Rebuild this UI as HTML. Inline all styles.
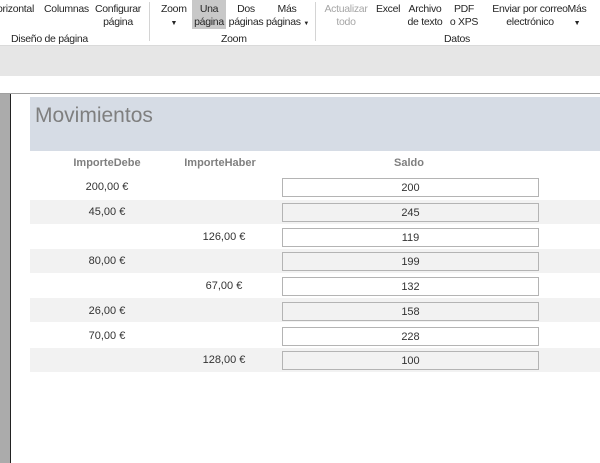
<!DOCTYPE html><html><head><style>
body{margin:0;width:600px;height:463px;overflow:hidden;background:#fff;font-family:"Liberation Sans",sans-serif;position:relative}
.a{position:absolute;white-space:nowrap}
.r{font-size:10.5px;letter-spacing:-0.3px;color:#262626;text-align:center;line-height:13px}
.c{font-size:11px;color:#444;text-align:center;width:120px}
.bx{position:absolute;left:282px;width:255px;height:17px;border:1px solid #b4b4b4;font-size:11px;color:#333;text-align:center;line-height:18px}
.g{position:absolute;left:30px;width:570px;height:24px;background:#f2f2f2}
</style></head><body>
<div class="a r" style="left:-3px;top:3px">orizontal</div>
<div class="a r" style="left:44px;top:3px">Columnas</div>
<div class="a r" style="left:93px;top:3px;width:50px">Configurar<br>página</div>
<div class="a r" style="left:11px;top:33px">Diseño de página</div>
<div class="a" style="left:149px;top:2px;width:1px;height:39px;background:#d4d4d4"></div>
<div class="a r" style="left:161px;top:3px">Zoom<br><span style="font-size:7px">▼</span></div>
<div class="a" style="left:192px;top:0;width:34px;height:29px;background:#c8c8c8"></div>
<div class="a r" style="left:193px;top:3px;width:32px">Una<br>página</div>
<div class="a r" style="left:227px;top:3px;width:38px">Dos<br>páginas</div>
<div class="a r" style="left:266px;top:3px;width:42px">Más<br>páginas <span style="font-size:6px">▼</span></div>
<div class="a r" style="left:221px;top:33px">Zoom</div>
<div class="a" style="left:315px;top:2px;width:1px;height:39px;background:#d4d4d4"></div>
<div class="a r" style="left:323px;top:3px;color:#a6a6a6;width:46px">Actualizar<br>todo</div>
<div class="a r" style="left:376px;top:3px">Excel</div>
<div class="a r" style="left:405px;top:3px;width:40px">Archivo<br>de texto</div>
<div class="a r" style="left:449px;top:3px;width:30px">PDF<br>o XPS</div>
<div class="a r" style="left:482px;top:3px;width:96px">Enviar por correo<br>electrónico</div>
<div class="a r" style="left:567px;top:3px;width:20px">Más<br><span style="font-size:7px">▼</span></div>
<div class="a r" style="left:444px;top:33px">Datos</div>
<div class="a" style="left:0;top:45px;width:600px;height:30px;background:#e6e6e6;border-top:1px solid #dadada"></div>
<div class="a" style="left:0;top:93px;width:600px;height:1px;background:#a0a0a0"></div>
<div class="a" style="left:0;top:94px;width:10px;height:369px;background:#ababab"></div>
<div class="a" style="left:10px;top:94px;width:1px;height:369px;background:#222"></div>
<div class="a" style="left:30px;top:97px;width:570px;height:54px;background:#d6dce5"></div>
<div class="a" style="left:35px;top:104px;font-size:21px;color:#7f7f7f">Movimientos</div>
<div class="a c" style="left:47px;top:157px;font-weight:bold;color:#7f7f7f">ImporteDebe</div>
<div class="a c" style="left:160px;top:157px;font-weight:bold;color:#7f7f7f">ImporteHaber</div>
<div class="a c" style="left:349px;top:157px;font-weight:bold;color:#7f7f7f">Saldo</div>
<div class="g" style="top:200px"></div><div class="g" style="top:249px"></div><div class="g" style="top:298px"></div><div class="g" style="top:348px"></div>
<div class="bx" style="top:178px;background:#fff">200</div>
<div class="bx" style="top:203px;background:#f2f2f2">245</div>
<div class="bx" style="top:228px;background:#fff">119</div>
<div class="bx" style="top:252px;background:#f2f2f2">199</div>
<div class="bx" style="top:277px;background:#fff">132</div>
<div class="bx" style="top:302px;background:#f2f2f2">158</div>
<div class="bx" style="top:327px;background:#fff">228</div>
<div class="bx" style="top:351px;background:#f2f2f2">100</div>
<div class="a c" style="left:47px;top:181px;color:#333">200,00 €</div>
<div class="a c" style="left:47px;top:206px;color:#333">45,00 €</div>
<div class="a c" style="left:164px;top:231px;color:#333">126,00 €</div>
<div class="a c" style="left:47px;top:255px;color:#333">80,00 €</div>
<div class="a c" style="left:164px;top:280px;color:#333">67,00 €</div>
<div class="a c" style="left:47px;top:305px;color:#333">26,00 €</div>
<div class="a c" style="left:47px;top:330px;color:#333">70,00 €</div>
<div class="a c" style="left:164px;top:354px;color:#333">128,00 €</div>
</body></html>
